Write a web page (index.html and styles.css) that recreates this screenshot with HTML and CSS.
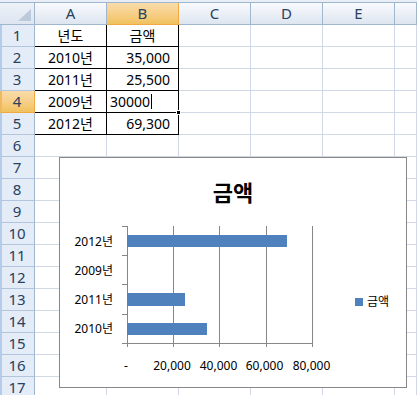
FILE: index.html
```html
<!DOCTYPE html>
<html lang="ko">
<head>
<meta charset="utf-8">
<title>Sheet</title>
<link rel="stylesheet" href="styles.css">
</head>
<body>
<div class="sheet">
  <div class="topstrip"></div>
  <div class="grid">
    <div class="corner"><span class="tri"></span></div><div class="ch">A</div><div class="ch sel">B</div><div class="ch">C</div><div class="ch">D</div><div class="ch">E</div><div class="ch"></div>
    <div class="rh">1</div><div class="c bd ctr">년도</div><div class="c bd ctr">금액</div><div class="c"></div><div class="c"></div><div class="c"></div><div class="c"></div>
    <div class="rh">2</div><div class="c bd ctr">2010년</div><div class="c bd num">35,000</div><div class="c"></div><div class="c"></div><div class="c"></div><div class="c"></div>
    <div class="rh">3</div><div class="c bd ctr">2011년</div><div class="c bd num">25,500</div><div class="c"></div><div class="c"></div><div class="c"></div><div class="c"></div>
    <div class="rh sel">4</div><div class="c bd ctr">2009년</div><div class="c bd edit">30000<span class="caret"></span></div><div class="c"></div><div class="c"></div><div class="c"></div><div class="c"></div>
    <div class="rh">5</div><div class="c bd ctr">2012년</div><div class="c bd num">69,300</div><div class="c"></div><div class="c"></div><div class="c"></div><div class="c"></div>
    <div class="rh">6</div><div class="c"></div><div class="c"></div><div class="c"></div><div class="c"></div><div class="c"></div><div class="c"></div>
    <div class="rh">7</div><div class="c"></div><div class="c"></div><div class="c"></div><div class="c"></div><div class="c"></div><div class="c"></div>
    <div class="rh">8</div><div class="c"></div><div class="c"></div><div class="c"></div><div class="c"></div><div class="c"></div><div class="c"></div>
    <div class="rh">9</div><div class="c"></div><div class="c"></div><div class="c"></div><div class="c"></div><div class="c"></div><div class="c"></div>
    <div class="rh">10</div><div class="c"></div><div class="c"></div><div class="c"></div><div class="c"></div><div class="c"></div><div class="c"></div>
    <div class="rh">11</div><div class="c"></div><div class="c"></div><div class="c"></div><div class="c"></div><div class="c"></div><div class="c"></div>
    <div class="rh">12</div><div class="c"></div><div class="c"></div><div class="c"></div><div class="c"></div><div class="c"></div><div class="c"></div>
    <div class="rh">13</div><div class="c"></div><div class="c"></div><div class="c"></div><div class="c"></div><div class="c"></div><div class="c"></div>
    <div class="rh">14</div><div class="c"></div><div class="c"></div><div class="c"></div><div class="c"></div><div class="c"></div><div class="c"></div>
    <div class="rh">15</div><div class="c"></div><div class="c"></div><div class="c"></div><div class="c"></div><div class="c"></div><div class="c"></div>
    <div class="rh">16</div><div class="c"></div><div class="c"></div><div class="c"></div><div class="c"></div><div class="c"></div><div class="c"></div>
    <div class="rh">17</div><div class="c"></div><div class="c"></div><div class="c"></div><div class="c"></div><div class="c"></div><div class="c"></div>
  </div>

  <div class="chart">
    <div class="chart-title">금액</div>
    <div class="chart-body">
      <svg class="plot" width="285" height="176" viewBox="0 0 285 176">
        <g stroke="#878787" stroke-width="1" fill="none">
          <line x1="113.5" y1="21" x2="113.5" y2="142"/>
          <line x1="159.5" y1="21" x2="159.5" y2="142"/>
          <line x1="206.5" y1="21" x2="206.5" y2="142"/>
          <line x1="252.5" y1="21" x2="252.5" y2="142"/>
          <line x1="67.5" y1="21" x2="67.5" y2="142"/>
          <line x1="67" y1="138.5" x2="253" y2="138.5"/>
          <line x1="62" y1="21.5" x2="67" y2="21.5"/>
          <line x1="62" y1="50.5" x2="67" y2="50.5"/>
          <line x1="62" y1="79.5" x2="67" y2="79.5"/>
          <line x1="62" y1="109.5" x2="67" y2="109.5"/>
          <line x1="62" y1="138.5" x2="67" y2="138.5"/>
        </g>
        <g fill="#4f81bd">
          <rect x="67" y="30" width="160" height="12"/>
          <rect x="67" y="88" width="58" height="13"/>
          <rect x="67" y="118" width="80" height="12"/>
        </g>
        <g class="lbl" text-anchor="end">
          <text x="53" y="36">2012년</text>
          <text x="53" y="65">2009년</text>
          <text x="53" y="94">2011년</text>
          <text x="53" y="123">2010년</text>
        </g>
        <g class="lbl" text-anchor="middle">
          <text x="66" y="160">-</text>
          <text x="112" y="160">20,000</text>
          <text x="158.5" y="160">40,000</text>
          <text x="204.5" y="160">60,000</text>
          <text x="251.5" y="160">80,000</text>
        </g>
      </svg>
      <div class="legend"><span class="key"></span><span>금액</span></div>
    </div>
  </div>
</div>
</body>
</html>
```
FILE: styles.css
```css
html, body {
  margin: 0;
  padding: 0;
  background: #ffffff;
}

body {
  font-family: "Noto Sans", "Noto Sans CJK KR", sans-serif;
  color: #000;
}

.sheet {
  position: relative;
  width: 417px;
  height: 395px;
  overflow: hidden;
}

.topstrip {
  height: 2px;
  background: #e9eef6;
  border-bottom: 1px solid #9eb6ce;
}

.grid {
  display: grid;
  grid-template-columns: 35px repeat(5, 72px) 1fr;
  grid-auto-rows: 22px;
}

.grid > div {
  box-sizing: border-box;
  display: flex;
  align-items: center;
  border-right: 1px solid #d0d7e5;
  border-bottom: 1px solid #d0d7e5;
  font-size: 14px;
  line-height: 1;
  white-space: nowrap;
}

.grid > .corner {
  background: linear-gradient(#eef2f8, #dce5f1);
  border-right-color: #9eb6ce;
  border-bottom-color: #9eb6ce;
  justify-content: flex-end;
  align-items: flex-end;
  padding: 0 3px 3px 0;
}

.tri {
  width: 13px;
  height: 12px;
  background: #bcc9da;
  clip-path: polygon(100% 0, 100% 100%, 0 100%);
}

.grid > .ch {
  background: linear-gradient(#f8fafd 0%, #eaeff6 55%, #dde5ef 100%);
  border-right-color: #9eb6ce;
  border-bottom-color: #9eb6ce;
  justify-content: center;
  color: #27415f;
  font-size: 15px;
}

.grid > .rh {
  background: #e4ecf7;
  border-left: 2px solid #b4cbea;
  border-right-color: #9eb6ce;
  border-bottom-color: #b3c5dc;
  justify-content: center;
  color: #27415f;
  font-size: 15px;
  padding-right: 2px;
}

.grid > .ch.sel,
.grid > .rh.sel {
  background: linear-gradient(#f9dcaa 0%, #f7cf88 50%, #f1c15f 100%);
  border-right-color: #f0a943;
  border-bottom-color: #f0a943;
}

.grid > .rh.sel {
  border-left-color: #f0b860;
}

.grid > .bd {
  border-right-color: #000;
  border-bottom-color: #000;
}

.grid > .ctr {
  justify-content: center;
}

.grid > .num {
  justify-content: flex-end;
  padding-right: 8px;
}

.grid > .edit {
  position: relative;
  padding-left: 3px;
  z-index: 1;
}

.edit::after {
  content: "";
  position: absolute;
  right: -3px;
  bottom: -3px;
  width: 5px;
  height: 5px;
  background: #000;
  border: 1px solid #fff;
  box-sizing: border-box;
}

.caret {
  display: inline-block;
  width: 1px;
  height: 15px;
  background: #000;
  margin-left: 1px;
}

/* chart floating over the sheet */
.chart {
  position: absolute;
  left: 59px;
  top: 157px;
  width: 348px;
  height: 231px;
  box-sizing: border-box;
  border: 1px solid #878787;
  background: #ffffff;
  display: flex;
  flex-direction: column;
}

.chart-title {
  box-sizing: border-box;
  height: 47px;
  padding-top: 22px;
  text-align: center;
  font-family: "Noto Sans CJK KR", sans-serif;
  font-weight: bold;
  font-size: 22px;
  line-height: 22px;
}

.chart-body {
  display: flex;
  align-items: flex-start;
}

.plot {
  display: block;
  flex: none;
}

.lbl {
  font-family: "Noto Sans", "Noto Sans CJK KR", sans-serif;
  font-size: 12px;
  fill: #000;
  dominant-baseline: central;
}

.legend {
  margin-top: 90px;
  margin-left: 10px;
  display: flex;
  align-items: center;
  gap: 4px;
  font-size: 12px;
  line-height: 14px;
}

.key {
  width: 8px;
  height: 8px;
  background: #4f81bd;
}
```
